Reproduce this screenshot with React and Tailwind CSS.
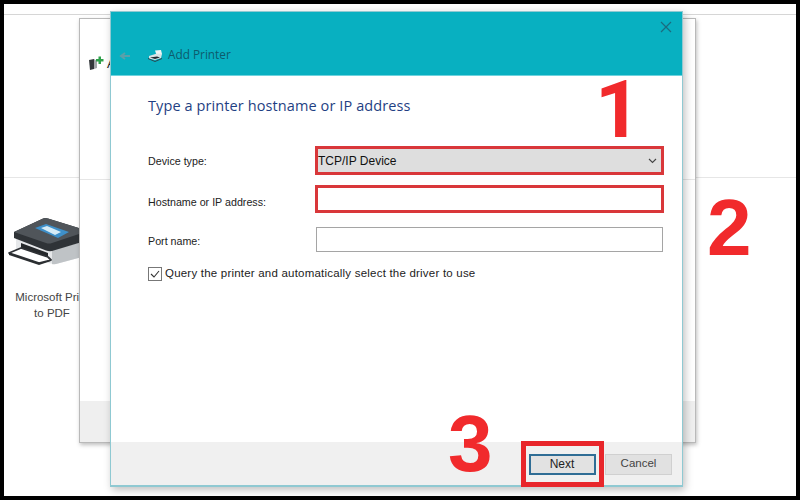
import React from "react";

function BigPrinter() {
  return (
    <svg width="76" height="56" viewBox="6 212 76 56" className="block">
      <path d="M16 238 L50 250 L82 242 L82 257 L56 264 Q52 264 48 263 L16 254 Z" fill="#e6e8ea" />
      <path d="M52 250 L82 242 L82 257 L56 264 Q53 264.5 52 264 Z" fill="#bfc3c6" />
      <path d="M14 232 L42 219 Q45 217.5 48 218.5 L82 229 L82 242 L52 251 Q49 251.5 46 250.5 L14 238 Z" fill="#2f3337" />
      <path d="M14 232 L42 219 Q45 217.5 48 218.5 L82 229 L82 233 L52 243 Q49 244 46 243 Z" fill="#50555a" />
      <path d="M35 228 L46 224 L69 232 L58 238 Z" fill="#3e8fc8" />
      <path d="M41 228 L47 226 L61 232 L55 235 Z" fill="#d6ebf6" />
      <path d="M21 243 L48 253 L48 259 L21 249 Z" fill="#25282b" />
      <path d="M21 248 L48 257 L51 260 L39 263 L9 253 Z" fill="#ffffff" stroke="#2f3236" strokeWidth="1.8" strokeLinejoin="round" />
      <path d="M9 253 L39 263 L51 260 L51 261 L39 265 L9 255 Z" fill="#2b2e31" />
    </svg>
  );
}

function SmallAddPrinter() {
  return (
    <svg width="16" height="15" viewBox="0 0 16 15" className="block">
      <path d="M1 4 L6 3 L6 13 L2 14 Z" fill="#33373a" />
      <path d="M6 3 L9 5 L9 12 L6 13 Z" fill="#a2a7a9" />
      <path d="M8 3 h2.5 v-2.5 h2.5 v2.5 h2.5 v2.5 h-2.5 v2.5 h-2.5 v-2.5 h-2.5 Z" fill="#2ea04a" />
    </svg>
  );
}

function TitlePrinter() {
  return (
    <svg width="15" height="12" viewBox="0 0 15 12" className="block">
      <path d="M7 0.5 L13 0 L14 4 L9 6.5 Z" fill="#eef4f4" />
      <path d="M1 6 L9 3.5 L14 4 L13 8 L7 10 L1 8.5 Z" fill="#d9e4e5" />
      <path d="M2 7.5 L9 6.5 L12 7.5 L7 9 Z" fill="#1f2a30" />
      <path d="M0 8 L7 11 L14 8 L14 9 L7 12 L0 9 Z" fill="#2b4650" />
    </svg>
  );
}

function FormRow({ label, children, className, labelClass }) {
  return (
    <div className={"flex items-center " + className}>
      <span className={"w-[167px] shrink-0 text-[10.7px] text-[#222] " + (labelClass || "")}>{label}</span>
      {children}
    </div>
  );
}

export default function App() {
  const sans = { fontFamily: '"Liberation Sans", Arial, sans-serif' };
  return (
    <div className="w-[800px] h-[500px] bg-black p-1 overflow-hidden" style={sans}>
      <div className="relative w-full h-full bg-white overflow-hidden">
        {/* Desktop backdrop rules */}
        <div className="h-[11px] border-b border-[#d6d6d6]" />
        <div className="h-[163px] border-b border-[#e6e6e6]" />

        {/* Devices and Printers item */}
        <div className="absolute left-[2px] top-[208px]">
          <BigPrinter />
        </div>
        <div className="absolute left-0 top-[285px] w-[96px] text-center text-[11.5px] leading-[16px] text-[#444] whitespace-nowrap">
          Microsoft Print
          <br />
          to PDF
        </div>

        {/* Back window */}
        <div className="absolute left-[75px] top-[14px] w-[617px] h-[425px] bg-white border border-[#b9b9b9] shadow-[1px_2px_4px_rgba(0,0,0,0.25)] flex flex-col">
          <div className="flex items-start gap-[2px] pl-[8px] pt-[37px] h-[160px] text-[13px] text-[#222]">
            <SmallAddPrinter />
            <span className="ml-[1px] leading-[15px]">Add</span>
          </div>
          <div className="flex-1 border-t border-[#e6e6e6]" />
          <div className="h-[41px] bg-[#efefef]" />
        </div>

        {/* Front dialog */}
        <div className="absolute left-[106px] top-[7px] w-[573px] h-[476px] bg-white border border-[#8fc9d2] border-b-2 shadow-[2px_3px_8px_rgba(0,0,0,0.25)] flex flex-col">
          <div className="relative h-[64px] shrink-0 bg-[#08b0c1] border-b border-[#6fd3de] flex items-end pb-[13px] pl-[8px]">
            <svg width="12" height="8" viewBox="0 0 12 8" className="mr-[17px] mb-[2px]">
              <path d="M11 4 H3 M6 1 L2 4 L6 7" stroke="#5aa0aa" strokeWidth="2" fill="none" />
            </svg>
            <TitlePrinter />
            <span className="ml-[5px] -mb-[2px] text-[11.8px] text-[#0d5b6c]" style={{ fontFamily: '"Open Sans", sans-serif' }}>
              Add Printer
            </span>
            <svg width="12" height="12" viewBox="0 0 12 12" className="absolute right-[10px] top-[9px]">
              <path d="M1 1 L11 11 M11 1 L1 11" stroke="#1b6c7f" strokeWidth="1.2" />
            </svg>
          </div>

          <div className="flex-1 pl-[37px] pr-[17px]">
            <h1
              className="mt-[19px] text-[14.5px] leading-[22px] text-[#1f3f83] tracking-[0.1px]"
              style={{ fontFamily: '"Open Sans", sans-serif' }}
            >
              Type a printer hostname or IP address
            </h1>

            <FormRow label="Device type:" className="mt-[29px]" labelClass="pt-[1px]">
              <div className="w-[349px] h-[29px] bg-[#dedede] border-[3px] border-[#d9373a] flex items-center justify-between pr-[4px] text-[12px] text-[#111]">
                <span className="pt-[1px]">TCP/IP Device</span>
                <svg width="9" height="6" viewBox="0 0 9 6">
                  <path d="M1 1 L4.5 4.5 L8 1" stroke="#444" strokeWidth="1.1" fill="none" />
                </svg>
              </div>
            </FormRow>

            <FormRow label="Hostname or IP address:" className="mt-[10px]" labelClass="pt-[6px]">
              <div className="w-[349px] h-[28px] bg-white border-[3px] border-[#d9373a]" />
            </FormRow>

            <FormRow label="Port name:" className="mt-[14px]" labelClass="pt-[3px]">
              <div className="ml-[1px] w-[347px] h-[25px] bg-white border border-[#a5a5a5]" />
            </FormRow>

            <div className="mt-[13px] flex items-center gap-[3px] text-[11.5px] text-[#222]">
              <div className="w-[14px] h-[14px] border border-[#777] flex items-center justify-center bg-white">
                <svg width="10" height="8" viewBox="0 0 10 8">
                  <path d="M1 4 L4 7 L9 1" stroke="#333" strokeWidth="1.1" fill="none" />
                </svg>
              </div>
              <span className="tracking-[0.21px]">Query the printer and automatically select the driver to use</span>
            </div>
          </div>

          <div className="h-[43px] shrink-0 bg-[#f0f0f0] flex items-center justify-end gap-[9px] pr-[10px] pt-[1px] text-[11.5px] text-[#222]">
            <div className="w-[67px] h-[21px] bg-[#e2e2e2] border-2 border-[#2f6d95] flex items-center justify-center text-[12px] pr-[1px]">Next</div>
            <div className="w-[67px] h-[21px] bg-[#e1e1e1] border border-[#d0d0d0] flex items-center justify-center text-[#444]">Cancel</div>
          </div>
        </div>

        {/* Next highlight */}
        <div className="absolute left-[517px] top-[437px] w-[83px] h-[46px] border-[5px] border-[#e8262b]" />

        {/* Step numbers */}
        <span className="absolute left-[591px] top-[60px] text-[80px] leading-[92px] font-bold text-[#f12a2c]" style={{ fontFamily: "Roboto, sans-serif" }}>1</span>
        <span className="absolute left-[703px] top-[178px] text-[80px] leading-[92px] font-bold text-[#f12a2c]">2</span>
        <span className="absolute left-[444px] top-[394px] text-[80px] leading-[92px] font-bold text-[#f12a2c]">3</span>
      </div>
    </div>
  );
}
